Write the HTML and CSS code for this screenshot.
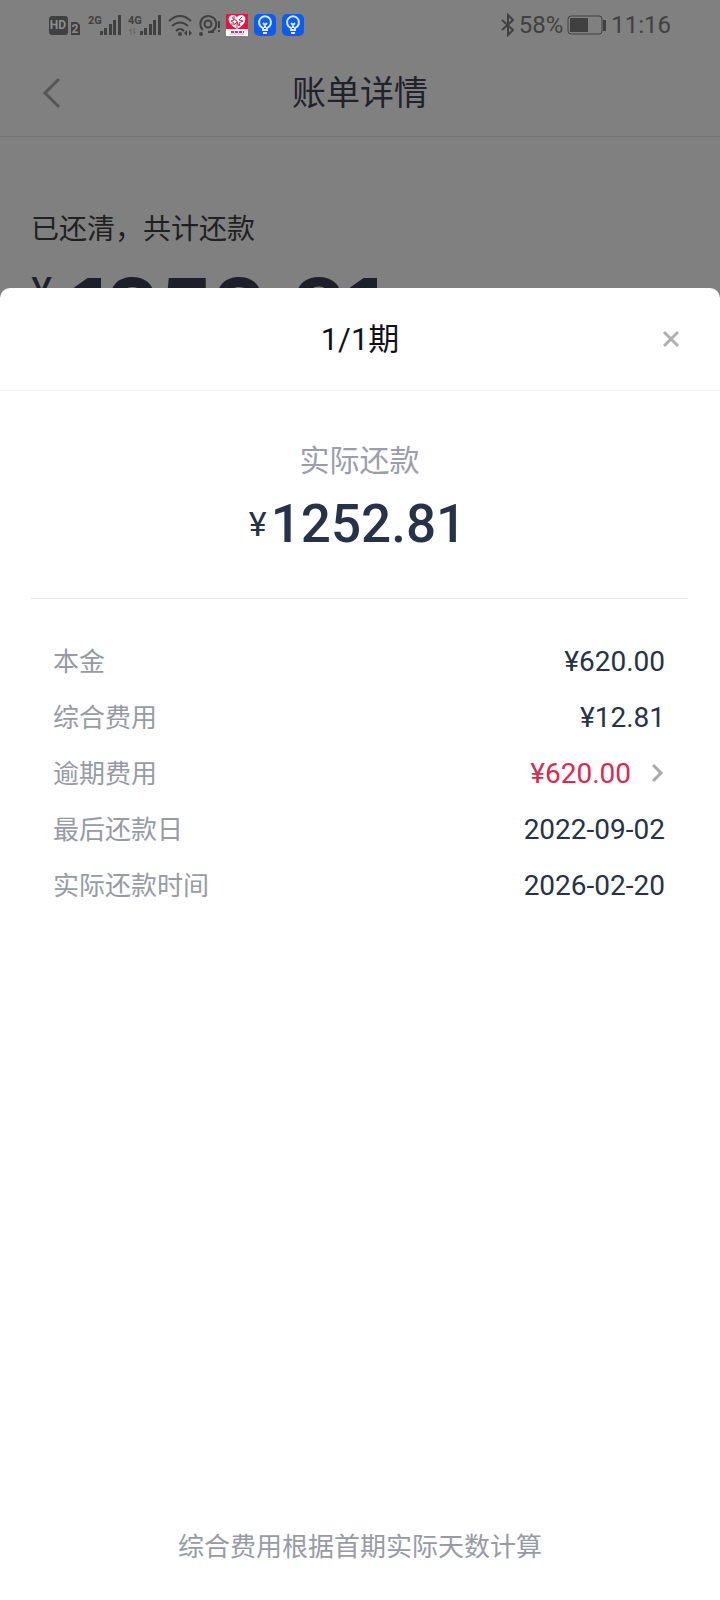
FILE: index.html
```html
<!DOCTYPE html>
<html lang="zh-CN">
<head>
<meta charset="utf-8">
<meta name="viewport" content="width=device-width, initial-scale=1">
<title>账单详情</title>
<link rel="stylesheet" href="styles.css">
</head>
<body>
<div class="page">
  <div class="status">
    <div class="status-group">
      <svg class="ic" width="34" height="24" viewBox="0 0 34 24" aria-hidden="true">
        <rect x="1" y="3" width="19" height="19" rx="3"/>
        <text class="hd" x="10" y="16" text-anchor="middle">HD</text>
        <path d="M23 9h6l3 3v10h-9z"/>
        <text class="hd" x="27" y="20" text-anchor="middle">2</text>
      </svg>
      <svg class="ic" width="34" height="24" viewBox="0 0 34 24" aria-hidden="true">
        <text class="net" x="0" y="11">2G</text>
        <path d="M12 18h3v4h-3zM16 15h3v7h-3zM21 11h3v11h-3zM25 7h3v15h-3zM30 2h3v20h-3z"/>
      </svg>
      <svg class="ic" width="34" height="24" viewBox="0 0 34 24" aria-hidden="true">
        <text class="net" x="0" y="11">4G</text>
        <path class="faint" d="M3 22v-6l-2 2M6 15v6l2-2"/>
        <path d="M12 18h3v4h-3zM16 15h3v7h-3zM21 11h3v11h-3zM25 7h3v15h-3zM30 2h3v20h-3z"/>
      </svg>
      <svg class="ic" width="25" height="24" viewBox="0 0 25 24" aria-hidden="true">
        <path class="line" d="M1 8q11-10 22 0M4 13q8-7 16 0M8 18q4-4 8 0"/>
        <circle cx="12" cy="21" r="2"/>
        <path d="M19 17v6l-3-3zM21 17v6l3-3z"/>
      </svg>
      <svg class="ic" width="21" height="24" viewBox="0 0 21 24" aria-hidden="true">
        <path class="line" d="M4 17a8 8 0 1 1 5 2h6"/>
        <circle class="line" cx="9" cy="11" r="3.500"/>
        <circle cx="2" cy="21" r="2"/>
        <path d="M19 8h2v7h-2zM19 17h2v2h-2z"/>
      </svg>
      <svg width="22" height="24" viewBox="0 0 22 24" aria-hidden="true">
        <path fill="#fff" d="M0 1h22v22H0z"/>
        <path fill="#e3173e" d="M0 1h22v15H0z"/>
        <path fill="#fff" d="M11 4C8 0 1 2 3 8c1 4 5 6 8 8 3-2 7-4 8-8 2-6-5-8-8-4z"/>
        <path stroke="#e3173e" stroke-width="1" fill="none" d="M6 4l2 3-3 1 3 2M8 3v3l3 2M16 4l-3 3 4 1-4 2 1 3M8 12l3-3 2 4M11 8v7M5 11h4"/>
        <path stroke="#d72b8c" stroke-width="2" stroke-dasharray="3 1" d="M5 19h13"/>
        <path stroke="#e99ac5" stroke-width="1" d="M4 21h14"/>
      </svg>
      <svg width="22" height="24" viewBox="0 0 22 24" aria-hidden="true">
        <rect y="1" width="22" height="22" rx="5" fill="#0b5cf0"/>
        <path class="bulb" d="M9 17v-2a6 6 0 1 1 4 0v2zM9 20h4M11 15v-4M9 10l2 2 2-2"/>
      </svg>
      <svg width="22" height="24" viewBox="0 0 22 24" aria-hidden="true">
        <rect y="1" width="22" height="22" rx="5" fill="#0b5cf0"/>
        <path class="bulb" d="M9 17v-2a6 6 0 1 1 4 0v2zM9 20h4M11 15v-4M9 10l2 2 2-2"/>
      </svg>
    </div>
    <div class="status-group status-end">
      <svg class="ic" width="14" height="24" viewBox="0 0 14 24" aria-hidden="true">
        <path class="line" d="M1 7l11 10-5 5V2l5 5L1 17"/>
      </svg>
      <span class="battery-text">58%</span>
      <svg class="ic" width="40" height="24" viewBox="0 0 40 24" aria-hidden="true">
        <rect x="1" y="3" width="34" height="18" rx="3" fill="none" stroke="#404040"/>
        <path d="M3 5h18v14H3zM36 7h3v11h-3z"/>
      </svg>
      <span>11:16</span>
    </div>
  </div>
  <header class="nav">
    <button class="back" type="button" aria-label="返回">
      <svg width="20" height="32" viewBox="0 0 20 32"><path d="M18 2L4 16l14 14" fill="none" stroke="#555" stroke-width="3"/></svg>
    </button>
    <h1 class="nav-title">账单详情</h1>
  </header>
  <main class="summary">
    <p class="summary-label">已还清，共计还款</p>
    <p class="summary-amount"><span class="summary-yen">¥</span>1252.81</p>
  </main>
</div>
<section class="sheet" role="dialog" aria-labelledby="sheet-title">
  <header class="sheet-head">
    <h2 class="sheet-title" id="sheet-title">1/1期</h2>
    <button class="close" type="button" aria-label="关闭">
      <svg width="18" height="18" viewBox="0 0 18 18"><path d="M2 2l14 14M16 2L2 16" fill="none" stroke="#b0b0b0" stroke-width="3"/></svg>
    </button>
  </header>
  <div class="total">
    <p class="total-label">实际还款</p>
    <p class="total-amount"><span class="total-yen">¥</span>1252.81</p>
  </div>
  <dl class="rows">
    <div class="row"><dt>本金</dt><dd>¥620.00</dd></div>
    <div class="row"><dt>综合费用</dt><dd>¥12.81</dd></div>
    <div class="row"><dt>逾期费用</dt><dd><button class="overdue" type="button">¥620.00
      <svg width="14" height="20" viewBox="0 0 14 20" aria-hidden="true"><path d="M2 2l8 8-8 8" fill="none" stroke="#aaa" stroke-width="3"/></svg></button></dd></div>
    <div class="row"><dt>最后还款日</dt><dd>2022-09-02</dd></div>
    <div class="row"><dt>实际还款时间</dt><dd>2026-02-20</dd></div>
  </dl>
  <p class="note">综合费用根据首期实际天数计算</p>
</section>
</body>
</html>
```
FILE: styles.css
```css
* { box-sizing: border-box; }
html, body { height: 100%; }
body {
  margin: 0;
  position: relative;
  overflow: hidden;
  background: #808080;
  font-family: Roboto, "Noto Sans CJK SC", sans-serif;
}
h1, h2, p, dl, dd { margin: 0; font-weight: 400; }
button { border: 0; padding: 0; background: none; font: inherit; color: inherit; cursor: pointer; }
svg { display: block; flex: none; }

.status {
  display: flex;
  justify-content: space-between;
  height: 50px;
  padding: 0 49px 0 48px;
  color: #404040;
  font-size: 24px;
}
.status-group { display: flex; align-items: center; gap: 6px; }
.status-end { gap: 4px; }
.ic { fill: #404040; }
.ic .line { fill: none; stroke: #404040; stroke-width: 2; }
.ic .faint { fill: none; stroke: #666; stroke-width: 1; }
.ic .hd { fill: #8c8c8c; font-size: 12px; font-weight: 700; }
.net { font-size: 11px; font-weight: 700; }
.bulb { fill: none; stroke: #dce8ff; stroke-width: 2; }

.nav {
  display: grid;
  grid-template-columns: 80px 1fr 80px;
  align-items: center;
  height: 87px;
  border-bottom: 1px solid #737373;
}
.back { justify-self: end; padding: 0 19px 0 0; }
.nav-title { text-align: center; color: #20222c; font-size: 34px; line-height: 48px; }

.summary { padding: 73px 31px 0; color: #202020; }
.summary-label { font-size: 28px; line-height: 40px; }
.summary-amount {
  display: flex;
  align-items: baseline;
  gap: 18px;
  padding-top: 11px;
  color: #1d202a;
  font-family: Inter, sans-serif;
  font-size: 84px;
  font-weight: 700;
  line-height: 96px;
}
.summary-yen { align-self: flex-start; font-size: 38px; font-weight: 500; line-height: 60px; }

.sheet {
  position: absolute;
  top: 288px;
  right: 0;
  bottom: 0;
  left: 0;
  display: flex;
  flex-direction: column;
  border-radius: 10px 10px 0 0;
  background: #fff;
  color: #273248;
}
.sheet-head {
  display: grid;
  grid-template-columns: 80px 1fr 80px;
  align-items: center;
  height: 103px;
  border-bottom: 1px solid #f4f4f4;
}
.sheet-title { grid-column: 2; text-align: center; color: #10121b; font-size: 31px; line-height: 50px; padding-top: 2px; }
.close { justify-self: start; padding: 0 22px; }

.total {
  margin: 0 32px 0 31px;
  padding: 48px 0 40px;
  border-bottom: 1px solid #e8e8e8;
  text-align: center;
}
.total-label { color: #999eaa; font-size: 30px; line-height: 44px; }
.total-amount {
  display: flex;
  justify-content: center;
  align-items: center;
  gap: 4px;
  padding: 8px 4px 0 0;
  font-size: 53px;
  font-weight: 500;
  line-height: 67px;
}
.total-yen { font-size: 34px; font-weight: 400; }

.rows { padding: 34px 55px 0 53px; }
.row { display: flex; justify-content: space-between; align-items: center; height: 56px; }
.row dt { padding-bottom: 4px; color: #969ba6; font-size: 26px; }
.row dd { font-size: 28px; }
.overdue { display: flex; align-items: center; gap: 20px; color: #dc2850; }
.note {
  margin-top: auto;
  padding: 0 32px 33px;
  color: #969ba6;
  font-size: 26px;
  line-height: 40px;
  text-align: center;
}
```
